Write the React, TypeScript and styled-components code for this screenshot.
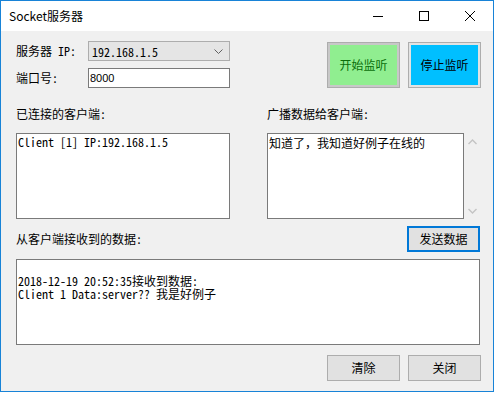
import * as React from "react";
import styled, {createGlobalStyle} from "styled-components";

const Global = createGlobalStyle`
  html, body {
    margin: 0;
    padding: 0;
    background: #ffffff;
  }
`;

const ui = `"Noto Sans CJK SC", "Liberation Sans", sans-serif`;
const mono = `"Noto Sans Mono CJK SC", "Liberation Mono", monospace`;

const Window = styled.div`
  box-sizing: border-box;
  width: 494px;
  height: 392px;
  border: 1px solid #1883d7;
  background: #f0f0f0;
  display: flex;
  flex-direction: column;
  font-family: ${ui};
  font-size: 12px;
  color: #000;
`;

const TitleBar = styled.div`
  height: 30px;
  background: #fff;
  display: flex;
  align-items: center;
`;

const Title = styled.div`
  flex: 1;
  padding-left: 8px;
  font-size: 12px;
  line-height: 14px;
  color: #000;
`;

const Caption = styled.div`
  width: 46px;
  height: 30px;
  display: flex;
  align-items: center;
  justify-content: center;
`;

const Body = styled.div`
  flex: 1;
  padding: 10px 12px 0 15px;
  display: flex;
  flex-direction: column;
`;

const TopRow = styled.div`
  display: flex;
  align-items: flex-start;
`;

const Form = styled.div`
  display: grid;
  grid-template-columns: 72px 142px;
  grid-auto-rows: 20px;
  row-gap: 7px;
  align-items: center;
`;

const Label = styled.div`
  font-family: ${mono};
  font-size: 12px;
  line-height: 14px;
  white-space: pre;
`;

const Combo = styled.div`
  box-sizing: border-box;
  height: 20px;
  border: 1px solid #adadad;
  background: #e5e5e5;
  display: flex;
  align-items: center;
  justify-content: space-between;
  padding: 0 6px 0 3px;
`;

const MonoText = styled.span`
  font-family: ${mono};
  font-size: 12px;
  line-height: 13px;
  white-space: pre;
`;

const TextBox = styled.div`
  box-sizing: border-box;
  height: 20px;
  border: 1px solid #7a7a7a;
  background: #fff;
  padding: 0 0 0 1px;
  font-family: "Liberation Sans", sans-serif;
  font-size: 11px;
  line-height: 18px;
`;

const Buttons = styled.div`
  margin-left: auto;
  display: flex;
  gap: 8px;
`;

const Button = styled.div<{$fill?: string; $ring?: string; $ink?: string; $tall?: boolean; $focus?: boolean}>`
  box-sizing: border-box;
  width: 73px;
  height: ${p => (p.$tall ? "46px" : "26px")};
  margin-top: ${p => (p.$tall ? "1px" : "0")};
  border: ${p => (p.$focus ? "2px solid #0078d7" : "1px solid #adadad")};
  box-shadow: ${p => (p.$ring ? `inset 0 0 0 2px ${p.$ring}` : "none")};
  background: ${p => p.$fill || "#e1e1e1"};
  color: ${p => p.$ink || "#000"};
  display: flex;
  align-items: center;
  justify-content: center;
  font-family: ${ui};
  font-size: 12px;
  line-height: 14px;
`;

const Middle = styled.div`
  margin-top: 19px;
  display: grid;
  grid-template-columns: 214px 37px 197px 16px;
`;

const Box = styled.div<{$col: string; $h: number; $mt: number}>`
  grid-column: ${p => p.$col};
  margin-top: ${p => p.$mt}px;
  box-sizing: border-box;
  height: ${p => p.$h}px;
  border: 1px solid #7a7a7a;
  background: #fff;
  padding: 1px 1px;
  display: flex;
  flex-direction: column;
`;

const Scroll = styled.div`
  grid-column: 4;
  margin-top: 12px;
  display: flex;
  flex-direction: column;
  justify-content: space-between;
  align-items: center;
  padding: 6px 0 5px;
`;

const Cell = styled.div<{$col: string; $mt?: number; $end?: boolean}>`
  grid-column: ${p => p.$col};
  margin-top: ${p => p.$mt || 0}px;
  display: flex;
  align-items: center;
  justify-content: ${p => (p.$end ? "flex-end" : "flex-start")};
`;

const Log = styled.div`
  font-family: ${mono};
  font-size: 12px;
  line-height: 13px;
  white-space: pre;
`;

const CjkLine = styled.div`
  font-family: ${ui};
  font-size: 12px;
  line-height: 16px;
  white-space: pre;
`;

const BottomRow = styled.div`
  margin-top: 10px;
  display: flex;
  justify-content: flex-end;
  gap: 8px;
`;

const Chevron = ({up}: {up?: boolean}) => (
  <svg width="9" height="6" viewBox="0 0 9 6">
    <path d={up ? "M0.5 5 L4.5 1 L8.5 5" : "M0.5 1 L4.5 5 L8.5 1"} fill="none" stroke="#c4c4c4" strokeWidth="1.4" />
  </svg>
);

const received = "\n2018-12-19 20:52:35接收到数据:\nClient 1 Data:server?? 我是好例子";

export default function App() {
  return (
    <>
      <Global />
      <Window>
        <TitleBar>
          <Title>Socket服务器</Title>
          <Caption>
            <svg width="10" height="10" viewBox="0 0 10 10">
              <path d="M0 5.5 H10" stroke="#000" strokeWidth="1" />
            </svg>
          </Caption>
          <Caption>
            <svg width="10" height="10" viewBox="0 0 10 10">
              <rect x="0.5" y="0.5" width="9" height="9" fill="none" stroke="#000" strokeWidth="1" />
            </svg>
          </Caption>
          <Caption>
            <svg width="10" height="10" viewBox="0 0 10 10">
              <path d="M0 0 L10 10 M10 0 L0 10" stroke="#000" strokeWidth="1" />
            </svg>
          </Caption>
        </TitleBar>
        <Body>
          <TopRow>
            <Form>
              <Label>服务器 IP:</Label>
              <Combo>
                <MonoText>192.168.1.5</MonoText>
                <svg width="9" height="5" viewBox="0 0 9 5">
                  <path d="M0.5 0.5 L4.5 4.5 L8.5 0.5" fill="none" stroke="#606060" strokeWidth="1" />
                </svg>
              </Combo>
              <Label>端口号:</Label>
              <TextBox>8000</TextBox>
            </Form>
            <Buttons>
              <Button $tall $fill="#90ee90" $ring="#c8c8c8" $ink="#0a6e0a">开始监听</Button>
              <Button $tall $fill="#00bfff" $ring="#e3e3e3">停止监听</Button>
            </Buttons>
          </TopRow>

          <Middle>
            <Cell $col="1"><Label>已连接的客户端:</Label></Cell>
            <Cell $col="3"><Label>广播数据给客户端:</Label></Cell>

            <Box $col="1" $h={86} $mt={12}>
              <Log>Client [1] IP:192.168.1.5</Log>
            </Box>
            <Box $col="3" $h={86} $mt={12}>
              <CjkLine>知道了，我知道好例子在线的</CjkLine>
            </Box>
            <Scroll>
              <Chevron up />
              <Chevron />
            </Scroll>

            <Cell $col="1" $mt={7}><Label>从客户端接收到的数据:</Label></Cell>
            <Cell $col="3 / 5" $mt={7} $end>
              <Button $focus>发送数据</Button>
            </Cell>

            <Box $col="1 / 5" $h={86} $mt={7}>
              <Log>{received}</Log>
            </Box>
          </Middle>

          <BottomRow>
            <Button>清除</Button>
            <Button>关闭</Button>
          </BottomRow>
        </Body>
      </Window>
    </>
  );
}
